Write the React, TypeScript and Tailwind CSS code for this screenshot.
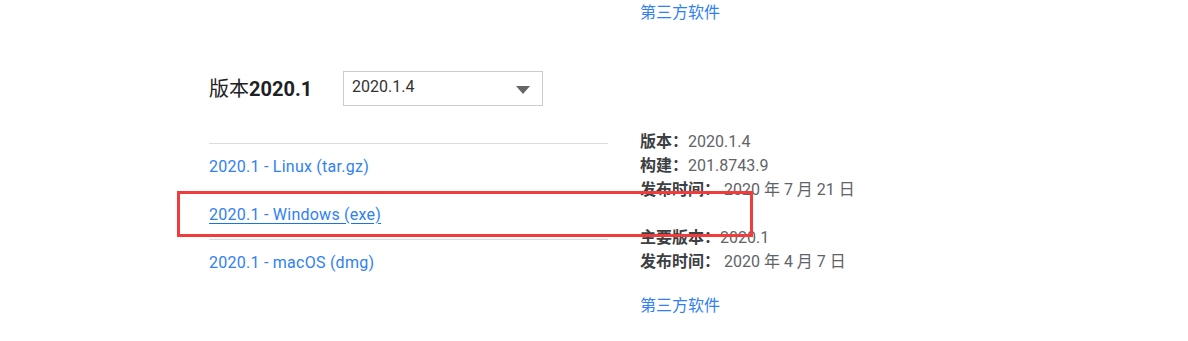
const font = { fontFamily: '"Roboto", "Noto Sans CJK SC", sans-serif' }

const links = ["2020.1 - Linux (tar.gz)", "2020.1 - Windows (exe)", "2020.1 - macOS (dmg)"]

function Info({ label, value }: { label: string; value: string }) {
  return (
    <div className="h-6 leading-6 whitespace-nowrap">
      <span className="font-semibold text-[#3c4043]">{label}</span>
      <span className="text-[#5f6368]">{value}</span>
    </div>
  )
}

export default function App() {
  return (
    <div className="w-[1188px] h-[341px] bg-white overflow-hidden pl-[209px] text-[16px]" style={font}>
      <div className="flex pt-px">
        <div className="w-[431px]" />
        <a href="#" className="h-6 leading-6 text-[#2f7ff5]">
          第三方软件
        </a>
      </div>

      <div className="flex items-center mt-[46px] h-[35px]">
        <h2 className="w-[134px] text-[20px] text-[#202124] leading-none">
          版本<span className="font-bold">2020.1</span>
        </h2>
        <div className="w-[200px] h-[35px] border border-[#cccccc] flex items-center justify-between pl-2 pr-3 text-[#333] pb-1">
          <span>2020.1.4</span>
          <span className="w-0 h-0 border-l-[7px] border-r-[7px] border-t-[8px] border-l-transparent border-r-transparent border-t-[#666] mt-1.5" />
        </div>
      </div>

      <div className="flex items-start mt-6 gap-8">
        <div className="w-[399px] pt-[13px]">
          {links.map((l, i) => (
            <div key={l} className="relative h-12 border-t border-[#dadce0] flex items-center pb-0.5">
              <a
                href="#"
                className={`text-[#2f7ff5] tracking-[0.25px] ${i === 1 ? "underline underline-offset-[3px] decoration-[#1a73e8]" : ""}`}
              >
                {l}
              </a>
              {i === 1 && (
                <div className="absolute -left-8 -top-px w-[576px] h-[46px] border-[3px] border-[#f23b3b]" />
              )}
            </div>
          ))}
        </div>

        <div>
          <Info label="版本：" value="2020.1.4" />
          <Info label="构建：" value="201.8743.9" />
          <Info label="发布时间：" value=" 2020 年 7 月 21 日" />
          <div className="h-6" />
          <Info label="主要版本：" value="2020.1" />
          <Info label="发布时间：" value=" 2020 年 4 月 7 日" />
          <a href="#" className="block mt-5 h-6 leading-6 text-[#2f7ff5]">
            第三方软件
          </a>
        </div>
      </div>
    </div>
  )
}
